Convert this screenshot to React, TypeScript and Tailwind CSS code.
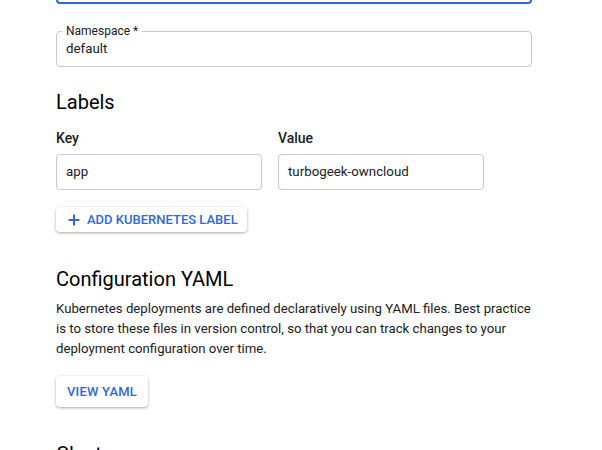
import { Plus } from "lucide-react";

function OutlinedField({ label, value }: { label: string; value: string }) {
  return (
    <div className="relative h-[36px] rounded-[4px] border border-[#c9c9c9] px-[9px] flex items-end pb-[7px]">
      <span className="absolute -top-[9px] left-[5px] bg-white px-[4px] text-[12px] leading-[16px] text-[#202124]">
        {label}
      </span>
      <span className="text-[13.3px] leading-[20px] text-[#202124]">{value}</span>
    </div>
  );
}

function TextInput({ value }: { value: string }) {
  return (
    <div className="h-[36px] w-[206px] rounded-[4px] border border-[#c9c9c9] px-[9px] flex items-center text-[13.3px] text-[#202124]">
      {value}
    </div>
  );
}

export default function App() {
  return (
    <div className="min-h-[450px] overflow-hidden bg-white font-['Roboto',sans-serif] text-[#202124]">
      <div className="w-[476px] ml-[56px]">
        <div className="-mt-[52px] h-[56px] rounded-[4px] border-2 border-[#3367d6]" />

        <div className="mt-[27px]">
          <OutlinedField label="Namespace *" value="default" />
        </div>

        <h2 className="mt-[21px] text-[20px] leading-[28px] font-normal text-black">Labels</h2>

        <div className="mt-[12px] flex gap-[16px]">
          <div className="flex flex-col">
            <span className="text-[14px] leading-[20px] font-medium">Key</span>
            <div className="mt-[6px]">
              <TextInput value="app" />
            </div>
          </div>
          <div className="flex flex-col">
            <span className="text-[14px] leading-[20px] font-medium">Value</span>
            <div className="mt-[6px]">
              <TextInput value="turbogeek-owncloud" />
            </div>
          </div>
        </div>

        <button className="mt-[17px] flex h-[25px] items-center gap-[5px] rounded-[4px] bg-white pl-[10px] pr-[9px] text-[13px] font-medium text-[#3367d6] shadow-[0_1px_3px_rgba(0,0,0,0.35)]">
          <Plus size={16} strokeWidth={3} />
          ADD KUBERNETES LABEL
        </button>

        <h2 className="mt-[33px] text-[20px] leading-[28px] font-normal text-black">Configuration YAML</h2>

        <p className="mt-[6px] w-[480px] text-[13.2px] leading-[20px] text-[#202124]">
          Kubernetes deployments are defined declaratively using YAML files. Best practice is to store these
          files in version control, so that you can track changes to your deployment configuration over time.
        </p>

        <button className="mt-[17px] flex h-[31px] w-[92px] items-center justify-center rounded-[4px] bg-white text-[13px] font-medium tracking-[0.2px] text-[#3367d6] shadow-[0_1px_3px_rgba(0,0,0,0.35)]">
          VIEW YAML
        </button>

        <h2 className="mt-[33px] text-[20px] leading-[28px] font-normal text-black">Cluster</h2>
      </div>
    </div>
  );
}
